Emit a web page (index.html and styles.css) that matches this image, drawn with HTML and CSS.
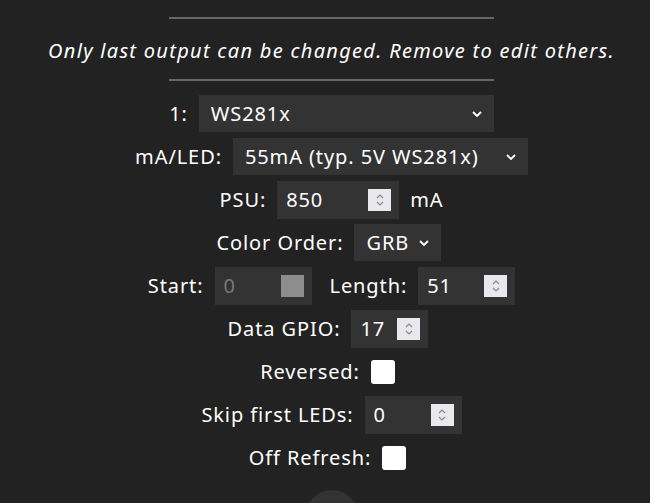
FILE: index.html
```html
<!DOCTYPE html>
<html lang="en">
<head>
    <meta charset="UTF-8">
    <title>LED Settings</title>
    <link rel="stylesheet" href="styles.css">
</head>
<body>
<div class="page">
    <hr>
    <p class="note">Only last output can be changed. Remove to edit others.</p>
    <hr>

    <div class="outputs">
        <div class="row">
            <span>1:</span>
            <div class="sel wide">
                <select>
                    <option>WS281x</option>
                    <option>SK6812 RGBW</option>
                    <option>APA102</option>
                </select>
                <svg class="chev" width="10" height="6" viewBox="0 0 10 6"><path d="M1 1 L5 5 L9 1" fill="none" stroke="#fff" stroke-width="1.8"/></svg>
            </div>
        </div>

        <div class="row">
            <span>mA/LED:</span>
            <div class="sel wide">
                <select>
                    <option>55mA (typ. 5V WS281x)</option>
                    <option>35mA (eco WS2812)</option>
                </select>
                <svg class="chev" width="10" height="6" viewBox="0 0 10 6"><path d="M1 1 L5 5 L9 1" fill="none" stroke="#fff" stroke-width="1.8"/></svg>
            </div>
        </div>

        <div class="row">
            <span>PSU:</span>
            <div class="num psu">
                <input type="number" value="850">
                <span class="spin"><svg width="10" height="14" viewBox="0 0 10 14"><path d="M2 5 L5 2 L8 5 M2 9 L5 12 L8 9" fill="none" stroke="#8a8a8e" stroke-width="1.2"/></svg></span>
            </div>
            <span>mA</span>
        </div>

        <div class="row">
            <span>Color Order:</span>
            <div class="sel order">
                <select>
                    <option>GRB</option>
                    <option>RGB</option>
                    <option>BRG</option>
                </select>
                <svg class="chev" width="10" height="6" viewBox="0 0 10 6"><path d="M1 1 L5 5 L9 1" fill="none" stroke="#fff" stroke-width="1.8"/></svg>
            </div>
        </div>

        <div class="row">
            <span>Start:</span>
            <div class="num short off">
                <input type="number" value="0" disabled>
                <span class="spin"></span>
            </div>
            <span class="second">Length:</span>
            <div class="num short">
                <input type="number" value="51">
                <span class="spin"><svg width="10" height="14" viewBox="0 0 10 14"><path d="M2 5 L5 2 L8 5 M2 9 L5 12 L8 9" fill="none" stroke="#8a8a8e" stroke-width="1.2"/></svg></span>
            </div>
        </div>

        <div class="row">
            <span>Data GPIO:</span>
            <div class="num pin">
                <input type="number" value="17">
                <span class="spin"><svg width="10" height="14" viewBox="0 0 10 14"><path d="M2 5 L5 2 L8 5 M2 9 L5 12 L8 9" fill="none" stroke="#8a8a8e" stroke-width="1.2"/></svg></span>
            </div>
        </div>

        <div class="row">
            <span>Reversed:</span>
            <input type="checkbox" class="box">
        </div>

        <div class="row">
            <span>Skip first LEDs:</span>
            <div class="num short">
                <input type="number" value="0">
                <span class="spin"><svg width="10" height="14" viewBox="0 0 10 14"><path d="M2 5 L5 2 L8 5 M2 9 L5 12 L8 9" fill="none" stroke="#8a8a8e" stroke-width="1.2"/></svg></span>
            </div>
        </div>

        <div class="row">
            <span>Off Refresh:</span>
            <input type="checkbox" class="box">
        </div>
    </div>

    <button class="add" type="button"></button>
</div>
</body>
</html>
```

FILE: styles.css
```css
* {
    box-sizing: border-box;
}

html {
    height: 503px;
    overflow: hidden;
}

body {
    margin: 0;
    padding: 0 0 0 13px;
    background-color: #222;
    color: #fff;
    font-family: "Noto Sans", "Open Sans", sans-serif;
    font-size: 20px;
    letter-spacing: 0.9px;
}

.page {
    display: flex;
    flex-direction: column;
    align-items: center;
}

hr {
    width: 325px;
    height: 2px;
    margin: 17px 0 0;
    border: 0;
    border-top: 2px solid #676767;
}

hr + .note + hr {
    margin-top: 0;
}

.note {
    margin: 0;
    height: 60px;
    line-height: 63px;
    font-style: italic;
    letter-spacing: 1.3px;
}

.outputs {
    padding-top: 11px;
    display: flex;
    flex-direction: column;
}

.row {
    height: 43px;
    display: flex;
    justify-content: center;
    align-items: center;
    gap: 11px;
}

.second {
    margin-left: 7px;
}

.sel {
    position: relative;
    height: 37px;
    background-color: #333;
}

.sel select {
    appearance: none;
    width: 100%;
    height: 100%;
    padding: 0 0 0 12px;
    border: none;
    background: transparent;
    color: #fff;
    font: inherit;
    letter-spacing: inherit;
}

.sel .chev {
    position: absolute;
    right: 12px;
    top: 16px;
}

.wide {
    width: 295px;
}

.order {
    width: 87px;
    margin-right: 5px;
}

.num {
    height: 38px;
    display: flex;
    align-items: center;
    background-color: #333;
    padding-right: 8px;
}

.num input {
    appearance: textfield;
    flex: 1;
    min-width: 0;
    height: 100%;
    padding: 0 0 0 9px;
    border: none;
    background: transparent;
    color: #fff;
    font: inherit;
    letter-spacing: inherit;
}

.num input::-webkit-inner-spin-button {
    -webkit-appearance: none;
}

.spin {
    width: 23px;
    height: 22px;
    background-color: #e9e9ed;
    display: flex;
    align-items: center;
    justify-content: center;
}

.psu {
    width: 122px;
}

.short {
    width: 97px;
}

.pin {
    width: 77px;
    margin-right: 7px;
}

.off input {
    color: #777;
}

.off .spin {
    background-color: #8d8d8d;
}

.box {
    appearance: none;
    width: 24px;
    height: 24px;
    margin: 0 8px 0 0;
    background-color: #fff;
    border-radius: 3px;
}

.add {
    margin-top: 11px;
    width: 54px;
    height: 54px;
    border: none;
    border-radius: 50%;
    background-color: #333;
}
```
